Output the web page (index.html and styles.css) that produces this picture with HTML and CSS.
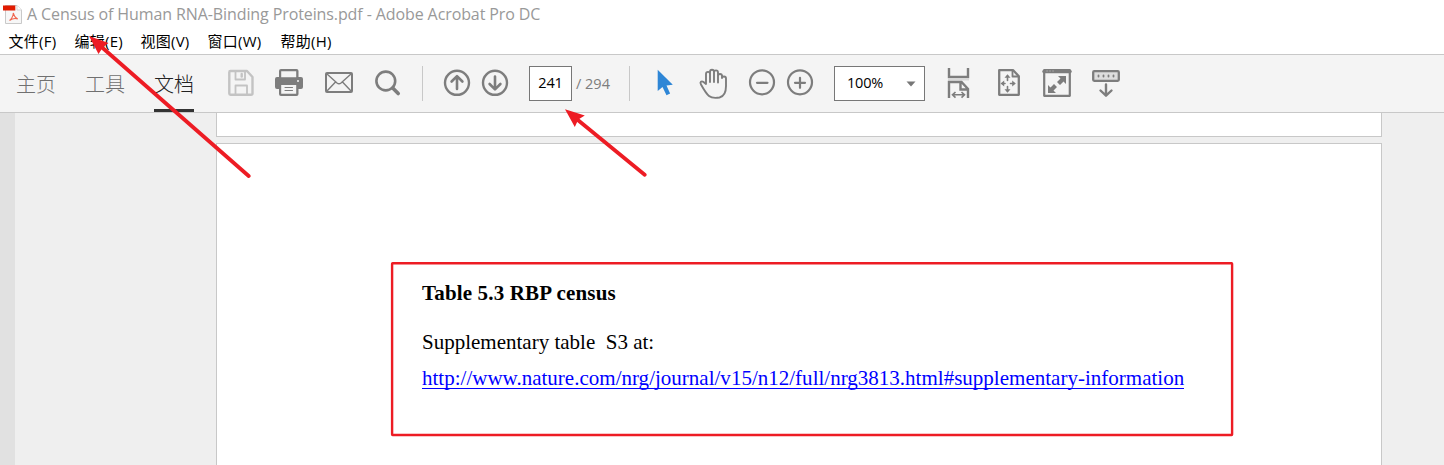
FILE: index.html
```html
<!DOCTYPE html>
<html lang="zh-CN">
<head>
<meta charset="utf-8">
<title>A Census of Human RNA-Binding Proteins.pdf - Adobe Acrobat Pro DC</title>
<link rel="stylesheet" href="styles.css">
</head>
<body>
<div class="window">
  <header class="titlebar">
    <svg class="app-icon" viewBox="2 3 21 22">
      <path d="M5.500 5.500H17l4.500 4.500v13.500h-16z" fill="#f7f7f7" stroke="#c9c9c9"/>
      <path d="M17 5.500V10h4.500" fill="#fff" stroke="#d5d5d5"/>
      <path d="M3 5.500h12.300v5H3z" fill="#e11b00"/>
      <path d="M9.500 20.500c1.500-1 4-4.500 3.800-7.500 1 3.500 2 5 4.500 6-2.500-1-5.500-.5-8.300 1.500z" fill="none" stroke="#f0664f" stroke-width="1.100"/>
    </svg>
    <span class="title-text">A Census of Human RNA-Binding Proteins.pdf - Adobe Acrobat Pro DC</span>
  </header>
  <nav class="menubar">
    <span>文件(F)</span><span>编辑(E)</span><span>视图(V)</span><span>窗口(W)</span><span>帮助(H)</span>
  </nav>
  <div class="toolbar">
    <div class="tabs"><span class="tab">主页</span><span class="tab">工具</span><span class="tab active">文档</span></div>
    <div class="group file-group">
      <svg viewBox="217 63 48 40" class="icon pale">
        <path d="M230.500 71h16.500l5.500 6v16.500q0 1.200-1.500 1.200h-20.500q-1.200 0-1.200-1.200v-21.300q0-1.200 1.200-1.200z"/>
        <path d="M235.500 71v8.500h9.500V71M235.500 94v-8.500h11.500V94" stroke-width="1.800"/><path d="M241.700 74v2.500"/>
      </svg>
      <svg viewBox="265 63 48 40" class="icon">
        <path class="solid" d="M275 79q0-2 2-2h2v-6q0-2 2-2h15.500q2 0 2 2v6h2.500q2 0 2 2v8q0 2-2 2h-2.500v5q0 2-2 2H281q-2 0-2-2v-5h-2q-2 0-2-2z"/>
        <path fill="#f4f4f4" stroke="none" d="M281.200 71.200h15v6h-15zM281.200 85h15v8.700h-15z"/>
        <path d="M285 87.500h7.500M285 90.500h7.500" stroke-width="1.100"/><circle cx="298" cy="81" r="1" fill="#f4f4f4" stroke="none"/>
      </svg>
      <svg viewBox="313 63 48 40" class="icon">
        <rect x="326" y="73" width="26" height="19" rx="1"/>
        <path d="M327 74l10 9q2 1.700 4 0l10-9M327 91l8.500-9M351 91l-8.500-9" stroke-width="1.400"/>
      </svg>
      <svg viewBox="361 63 48 40" class="icon">
        <circle cx="385.800" cy="81" r="9.400" stroke-width="2.600"/><path d="M392.700 88l5.500 5.500" stroke-width="3.600"/>
      </svg>
    </div>
    <i class="separator"></i>
    <div class="group nav-group">
      <svg viewBox="438 63 38 40" class="icon"><circle cx="457" cy="82.800" r="12" stroke-width="2.400"/><path d="M457 89v-12M451.600 81.500l5.400-5.400 5.400 5.400" stroke-width="2.600"/></svg>
      <svg viewBox="476 63 38 40" class="icon"><circle cx="495" cy="82.800" r="12" stroke-width="2.400"/><path d="M495 76.500v12M489.600 84l5.400 5.400 5.400-5.400" stroke-width="2.600"/></svg>
    </div>
    <div class="page-box"><span>241</span></div>
    <span class="page-total">/ 294</span>
    <i class="separator"></i>
    <div class="group cursor-group">
      <svg viewBox="640 63 48 40" class="icon"><path d="M657.700 69.800L672.800 84.800l-6.300.6 3.600 8-3.600 1.900-4-8.300-4.800 4z" fill="#2e86d6" stroke="none"/></svg>
      <svg viewBox="688 63 48 40" class="icon"><path stroke-width="1.900" d="M706 84v-10c0-2.800 4-2.800 4 0v8v-10c0-3 4-3 4 0v10v-9.500c0-2.800 4-2.800 4 0v10v-6.500c0-2.600 4-2.600 4 0v2c0-2 4-2 4 .5v7.500c0 6-2.500 10.500-6.500 11.500-4 .7-8 .5-10.500-1.500-3-2.500-5.500-7-8-11.500-1.500-2.500.5-4 2.500-2.500z"/></svg>
    </div>
    <div class="group zoom-group">
      <svg viewBox="743 63 38 40" class="icon"><circle cx="762" cy="82.300" r="12" stroke-width="2.200"/><path d="M757 82.800h10.500" stroke-width="2.200"/></svg>
      <svg viewBox="781 63 38 40" class="icon"><circle cx="800" cy="82.300" r="12" stroke-width="2.200"/><path d="M795 82.800h10M800 77.800v10" stroke-width="2.200"/></svg>
    </div>
    <div class="zoom-select"><span>100%</span><svg viewBox="0 0 10 6"><path d="M.5.500h9L5 5.500z" fill="#777"/></svg></div>
    <div class="group view-group">
      <svg viewBox="934 63 49 40" class="icon sharp">
        <path d="M949 68v9h19v-9" stroke-width="2.400"/><path d="M948 79.500h21" stroke="#d9d9d9" stroke-width="2"/>
        <path d="M949 98V82h12.500l6.500 7v9M960.500 82v7.500h7.500" stroke-width="2.400"/>
        <path d="M953 94.800h11M955.500 92l-3 2.800 3 2.800M961.500 92l3 2.800-3 2.800" stroke-width="1.600"/>
      </svg>
      <svg viewBox="983 63 49 40" class="icon">
        <path d="M999.200 70.200h14l5.600 6v18.600h-19.600z" stroke-width="2.300"/><path d="M1012.500 70.500v6h6" stroke-width="1.800"/>
        <path d="M1007.500 76v4.500M1007.500 86.500V91M1002 83.500h3M1010.500 83.500h3" stroke-width="1.600"/>
        <path class="solid" d="M1007.500 74.200l3 3.600h-6zM1007.500 92.800l3-3.600h-6zM1000.600 83.500l3.600-3v6zM1015.800 83.500l-3.600-3v6z"/>
      </svg>
      <svg viewBox="1032 63 49 40" class="icon">
        <rect x="1044.200" y="70.200" width="25.600" height="25.600" stroke-width="2.200"/><path d="M1044 71.500h26" stroke-width="3.500"/>
        <path class="solid" d="M1058 76h8v8l-2.500-2.500-3.500 3.500-3-3 3.500-3.500zM1056 93h-8v-8l2.500 2.500 3.500-3.500 3 3-3.500 3.500z"/>
        <path d="M1047 71h.1M1050 71h.1M1053 71h.1" stroke="#ccc" stroke-width="1"/>
      </svg>
      <svg viewBox="1081 63 49 40" class="icon">
        <rect x="1093.200" y="71.200" width="25.600" height="9.600" rx="1" stroke-width="2.300" fill="#ddd"/>
        <path d="M1098.500 75.500v1M1103.500 75.500v1M1108.500 75.500v1M1113.500 75.500v1" stroke-width="1.800"/>
        <path d="M1106 84.500V95M1100.500 90.500l5.500 5.200 5.500-5.200" stroke-width="2.400"/>
      </svg>
    </div>
  </div>
  <main class="workspace">
    <aside class="side-strip"></aside>
    <div class="pages">
      <section class="page previous"></section>
      <section class="page current">
        <h1>Table 5.3 RBP census</h1>
        <p>Supplementary table&nbsp; S3 at:</p>
        <a>http://www.nature.com/nrg/journal/v15/n12/full/nrg3813.html#supplementary-information</a>
      </section>
    </div>
  </main>
  <svg class="annotations" viewBox="0 0 1444 465">
    <rect x="392.100" y="263.200" width="840" height="171.800" rx=".5" fill="none" stroke="#ed1c24" stroke-width="2.400"/>
    <path d="M101 46.500L248.700 176M576 118.500L644.700 174.800" fill="none" stroke="#ed1c24" stroke-width="3.800" stroke-linecap="round"/>
    <path d="M89 36l19.500 7-5.500 4.200-4.500 6.800zM565 109.200l19.800 6.200-6.500 4.100-3.500 7.500z" fill="#ed1c24"/>
  </svg>
</div>
</body>
</html>
```
FILE: styles.css
```css
* { box-sizing: border-box; }
body { margin: 0; background: #fff; font-family: "Noto Sans", "Noto Sans CJK SC", sans-serif; }
.window { position: relative; width: 1444px; height: 465px; overflow: hidden; display: flex; flex-direction: column; }
.titlebar { height: 28px; padding-left: 2px; display: flex; gap: 4px; align-items: center; }
.app-icon { width: 21px; height: 22px; }
.title-text { font-family: "Open Sans", sans-serif; font-size: 16px; letter-spacing: -0.1px; line-height: 28px; color: #999; white-space: nowrap; }
.menubar { height: 26px; padding-left: 8.500px; display: grid; grid-template-columns: 66px 66px 67px 73px 60px; font-size: 15px; line-height: 26px; letter-spacing: 0.25px; color: #000; white-space: nowrap; }
.menubar span { font-family: "Open Sans", "Noto Sans CJK SC", sans-serif; font-weight: 400; }
.toolbar { height: 59px; background: #f4f4f4; border-top: 1px solid #c8c8c8; border-bottom: 1px solid #c8c8c8; display: flex; align-items: center; }
.tabs { align-self: stretch; display: flex; gap: 29px; padding-left: 16px; }
.tab { width: 40px; border-bottom: 3px solid transparent; font-family: "Noto Sans CJK SC", sans-serif; font-weight: 300; font-size: 20px; line-height: 57px; color: #707070; white-space: nowrap; }
.tab.active { color: #222; border-color: #333; }
.group { display: flex; height: 40px; margin-bottom: 1px; }
.file-group { margin-left: 23px; }
.icon { width: 48px; height: 40px; fill: none; stroke: #7d7d7d; stroke-width: 2; stroke-linecap: round; stroke-linejoin: round; }
.icon .solid { fill: #7d7d7d; stroke: none; }
.icon.pale { stroke: #c3c3c3; stroke-width: 2.400; }
.sharp { stroke-linecap: butt; stroke-linejoin: miter; }
.separator { width: 1px; height: 35px; background: #c8c8c8; }
.file-group + .separator { margin-left: 13px; }
.nav-group { margin-left: 15px; }
.nav-group .icon, .zoom-group .icon { width: 38px; }
.page-box { width: 43px; height: 35px; margin-left: 15px; border: 1px solid #777; background: #fff; font-family: "Open Sans", sans-serif; font-size: 14.500px; line-height: 32px; letter-spacing: -0.2px; text-align: center; }
.page-total { width: 57px; padding-left: 4px; font-family: "Open Sans", sans-serif; font-size: 14.500px; color: #7d7d7d; }
.cursor-group { margin-left: 10px; }
.zoom-group { margin-left: 7px; }
.zoom-select { width: 91px; height: 35px; margin-left: 15px; padding: 0 8px 0 12px; display: flex; align-items: center; justify-content: space-between; border: 1px solid #777; background: #fff; font-family: "Open Sans", sans-serif; font-size: 14.500px; }
.zoom-select span { line-height: 31px; padding-bottom: 2px; letter-spacing: -0.2px; }
.zoom-select svg { width: 10px; height: 6px; }
.view-group { margin-left: 9px; }
.view-group .icon { width: 49px; }
.workspace { flex: 1; display: flex; background: #efefef; }
.side-strip { width: 15px; background: #e1e1e1; }
.pages { width: 1166px; margin-left: 201px; display: flex; flex-direction: column; gap: 6px; }
.page { background: #fff; border: 1px solid #c8c8c8; }
.previous { height: 24px; border-top: 0; }
.current { flex: 1; border-bottom: 0; padding: 137px 0 0 205px; font-family: "Liberation Serif", serif; font-size: 21px; line-height: 24px; color: #000; }
.current h1 { margin: 0 0 25px; font-size: 21px; line-height: 24px; letter-spacing: 0.16px; }
.current p { margin: 0 0 12px; }
.current a { display: inline-block; height: 23px; color: #00f; border-bottom: 1px solid #00f; letter-spacing: 0.01px; white-space: nowrap; }
.annotations { position: absolute; top: 0; left: 0; width: 1444px; height: 465px; }
```
